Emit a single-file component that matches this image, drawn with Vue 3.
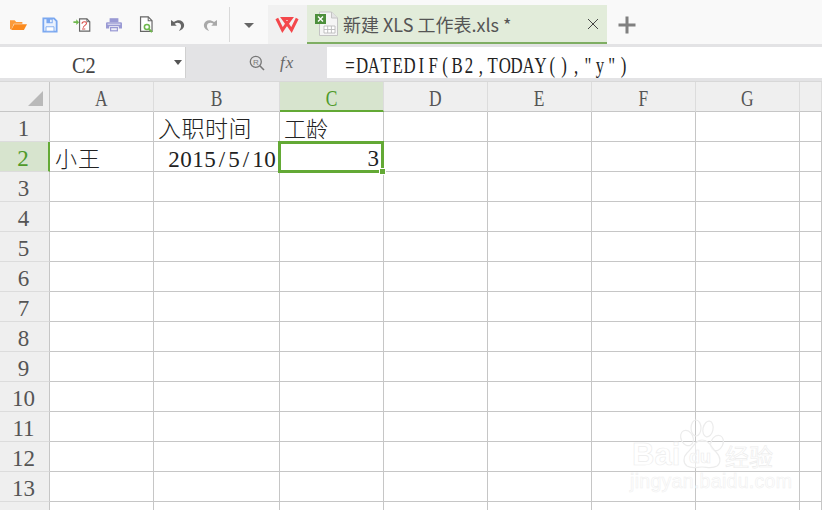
<script setup>
const columns = [
  { name: 'A', active: false }, { name: 'B', active: false }, { name: 'C', active: true },
  { name: 'D', active: false }, { name: 'E', active: false }, { name: 'F', active: false },
  { name: 'G', active: false }, { name: '', active: false }
]
const rows = Array.from({ length: 14 }, (_, i) => i + 1)
const chars = (s) => s.split('')
const formula = chars('=DATEDIF(B2,TODAY(),"y")')
const dateChars = chars('2015/5/10')
const colIndexes = [0, 1, 2, 3, 4, 5, 6, 7]
</script>

<template>
  <div class="app">
    <div class="toolbar">
      <div class="tools">
        <button class="tool">
          <svg width="17" height="14" viewBox="2 3 22 15">
            <path d="M2 4.500h6l2 2h8v2.500H7L4 16H2z" fill="#fb9a3a" />
            <path d="M7.500 9.500H24l-4 7.500H3.500z" fill="#fb8a1e" />
          </svg>
        </button>
        <button class="tool">
          <svg width="16" height="16" viewBox="1 1 18 18">
            <path d="M2.500 2.500h12l3 3v12h-15z" fill="#eaf1fd" stroke="#7ba8f0" stroke-width="2" />
            <path d="M6 3h7v5H6z" fill="#7ba8f0" />
            <path d="M10 4h2v3h-2z" fill="#eaf1fd" />
            <path d="M5.500 12h9v5h-9z" fill="#fff" stroke="#7ba8f0" stroke-width="1" />
          </svg>
        </button>
        <button class="tool">
          <svg width="18" height="16" viewBox="0 1 22 18">
            <path d="M8 2.500h9l3.500 3.500v11.500H8z" fill="#fff" stroke="#666" stroke-width="1.400" />
            <path d="M17 2.500V6h3.500" fill="none" stroke="#666" stroke-width="1.200" />
            <path d="M0.500 5.500h3.500V3l3.500 3.500L4 10V7.500H0.500z" fill="#6fb84d" />
            <path d="M11 8.500c0-3 5.500-3.500 5.500-.500 0 2.500-4 2.500-4 5.500M11 15h4" fill="none" stroke="#d9534f" stroke-width="1.300" />
          </svg>
        </button>
        <button class="tool">
          <svg width="16" height="14" viewBox="1 2 20 17">
            <path d="M5.500 2h11v5h-11z" fill="#9a9ad4" />
            <path d="M1 8.500Q1 7 2.500 7h17Q21 7 21 8.500V15h-4v-3H5v3H1z" fill="#9a9ad4" />
            <path d="M6 13h10v5.500H6z" fill="#9a9ad4" />
            <path d="M3 9.500h16" stroke="#fff" stroke-width="1" />
            <path d="M7.500 14.500h7v2.500h-7z" fill="#eeeef8" />
          </svg>
        </button>
        <button class="tool">
          <svg width="15" height="17" viewBox="2 0.500 16 20">
            <path d="M3 1.500h9l4.500 4.500v12.500H3z" fill="#fff" stroke="#666" stroke-width="1.400" />
            <path d="M12 1.500V6h4.500" fill="none" stroke="#666" stroke-width="1.200" />
            <circle cx="10.500" cy="13.500" r="3" fill="none" stroke="#6fb84d" stroke-width="1.800" />
            <path d="M12.800 15.800L16.500 19.500" stroke="#6fb84d" stroke-width="2.200" />
          </svg>
        </button>
        <button class="tool">
          <svg width="14" height="14" viewBox="1 3 17 15">
            <path d="M1 4.500v7h7L5.500 9C8 7 12 7.500 13 10.500c.7 2.300-.5 5-2.500 7 4.500-1 7-4.500 6.300-8C16 5 10 2.500 4.500 7z" fill="#666" />
          </svg>
        </button>
        <button class="tool">
          <svg width="14" height="14" viewBox="2 3 17 15">
            <path d="M19 4.500v7h-7l2.500-2.500C12 7 8 7.500 7 10.500c-.7 2.300.5 5 2.500 7-4.500-1-7-4.500-6.300-8C4 5 10 2.500 15.500 7z" fill="#a9a9a9" />
          </svg>
        </button>
      </div>
      <div class="separator"></div>
      <div class="caret-slot"><span class="caret dark"></span></div>
      <div class="wps-btn">
        <svg width="24" height="16" viewBox="0 0 24 16">
          <path d="M1.800 1.500L7.500 13L12 6.500L16.500 13L22.200 1.500M8 1.500h8L12 7z" fill="none" stroke="#f4474b" stroke-width="3" stroke-linejoin="miter" />
        </svg>
      </div>
      <div class="tab">
        <svg class="xls-icon" width="24" height="26" viewBox="0 0 24 26">
          <path d="M4.500 1h12l6 6v17.500h-18z" fill="#f5f5f5" stroke="#c4c4c4" />
          <path d="M16.500 1v6h6" fill="#e4e4e4" stroke="#c4c4c4" />
          <path d="M9 15h11v7H9zM9 18.500h11M12.700 15v7M16.400 15v7" fill="#fff" stroke="#bbb" stroke-width=".9" />
          <rect x="0" y="3" width="11" height="10" fill="#4d8f3c" />
          <path d="M3 5.500l5 5M8 5.500l-5 5" stroke="#fff" stroke-width="1.400" />
        </svg>
        <span class="tab-title">新建 XLS 工作表.xls *</span>
        <svg class="tab-close" width="12" height="12" viewBox="0 0 12 12">
          <path d="M1 1l10 10M11 1L1 11" stroke="#444" stroke-width="1" />
        </svg>
      </div>
      <svg class="plus" width="20" height="20" viewBox="0 0 20 20">
        <path d="M10 1.500v17M1.500 10h17" stroke="#808080" stroke-width="3" />
      </svg>
    </div>

    <div class="formula-bar">
      <div class="name-box">
        <span class="name-value narrow">C2</span>
        <span class="caret"></span>
      </div>
      <div class="fx-tools">
        <svg class="zoom-r" width="16" height="16" viewBox="0 0 16 16">
          <circle cx="6.800" cy="6.800" r="5.500" fill="none" stroke="#777" stroke-width="1.300" />
          <path d="M10.800 10.800L15 15" stroke="#777" stroke-width="1.600" />
          <text x="6.800" y="9.500" class="zoom-letter">R</text>
        </svg>
        <span class="fx">fx</span>
      </div>
      <div class="formula-input">
        <div class="formula-text">
          <span v-for="(c, i) in formula" :key="i" class="ch-wide">{{ c }}</span>
        </div>
      </div>
    </div>

    <div class="sheet">
      <div class="corner"><span class="corner-mark"></span></div>
      <div
        v-for="col in columns"
        :key="col.name"
        class="col-head"
        :class="{ active: col.active }"
      ><span class="narrow">{{ col.name }}</span></div>

      <template v-for="row in rows" :key="row">
        <div class="row-head" :class="{ active: row === 2 }">{{ row < 14 ? row : '' }}</div>
        <div v-for="c in colIndexes" :key="c" class="cell">
          <span v-if="row === 1 && c === 1" class="cjk head-b">入职时间</span>
          <span v-else-if="row === 1 && c === 2" class="cjk head-c">工龄</span>
          <span v-else-if="row === 2 && c === 0" class="cjk name">小王</span>
          <span v-else-if="row === 2 && c === 1" class="date">
            <span v-for="(d, i) in dateChars" :key="i" class="ch">{{ d }}</span>
          </span>
          <div v-else-if="row === 2 && c === 2" class="selected">
            <span class="value">3</span>
            <span class="handle"></span>
          </div>
        </div>
      </template>
    </div>

    <svg class="watermark" width="160" height="80" viewBox="0 0 160 80">
      <g fill="none" stroke="#ececec" stroke-width="1.200">
        <ellipse cx="57" cy="20" rx="6" ry="8" transform="rotate(-25 57 20)" />
        <ellipse cx="66" cy="10" rx="5" ry="8" />
        <ellipse cx="78" cy="11" rx="5" ry="8" transform="rotate(12 78 11)" />
        <ellipse cx="87" cy="25" rx="6" ry="8" transform="rotate(25 87 25)" />
        <path d="M72 22c7 0 9 7 14 12 5 5 5 11 1 14-5 3-10 1-15 1s-10 2-15-1c-4-3-4-9 0-13 6-5 8-13 15-13z" fill="#fff" fill-opacity=".6" />
      </g>
      <text x="2" y="47" class="wm wm-bai">Bai</text>
      <text x="59" y="45" class="wm wm-du">du</text>
      <text x="95" y="48" class="wm wm-cn">经验</text>
      <text x="0" y="70" class="wm wm-url">jingyan.baidu.com</text>
    </svg>
  </div>
</template>

<style>
html, body { margin: 0; padding: 0; background: #fff; }
</style>

<style scoped>
.app {
  position: relative;
  width: 822px;
  height: 510px;
  overflow: hidden;
  background: #fff;
  font-family: "Liberation Serif", serif;
}

.toolbar {
  height: 44px;
  background: #f9f9f9;
  display: flex;
  align-items: flex-end;
  box-sizing: border-box;
}
.tools {
  display: flex;
  height: 44px;
  align-items: center;
  padding-left: 2px;
  padding-top: 5px;
  box-sizing: border-box;
}
.tool {
  width: 32px;
  height: 32px;
  display: flex;
  align-items: center;
  justify-content: center;
  padding: 0;
  border: 0;
  background: none;
}
.separator {
  width: 1px;
  height: 35px;
  background: #d9d9d9;
  margin: 0 0 2px 3px;
}
.caret-slot {
  width: 38px;
  height: 44px;
  display: flex;
  align-items: center;
  justify-content: center;
  padding-top: 6px;
  box-sizing: border-box;
}
.caret {
  width: 0;
  height: 0;
  border-left: 4px solid transparent;
  border-right: 4px solid transparent;
  border-top: 5px solid #555;
}
.caret.dark { border-left-width: 5px; border-right-width: 5px; border-top-color: #666; }
.wps-btn {
  width: 39px;
  height: 39px;
  background: #f1f1f1;
  display: flex;
  align-items: center;
  justify-content: center;
  padding-right: 2px;
  box-sizing: border-box;
}
.tab {
  width: 300px;
  height: 39px;
  box-sizing: border-box;
  background: #e2ecda;
  border-bottom: 2px solid #7fae63;
  display: flex;
  align-items: center;
  padding-left: 8px;
}
.xls-icon { flex: none; }
.tab-title {
  font-family: "Noto Sans CJK SC", "Noto Sans", sans-serif;
  font-size: 18px;
  color: #555;
  margin-left: 4px;
  white-space: nowrap;
  flex: 1;
}
.tab-close { margin-right: 8px; flex: none; }
.plus { margin: 6px 0 0 10px; flex: none; align-self: center; }

.formula-bar {
  height: 38px;
  background: #e3e3e5;
  display: flex;
  align-items: center;
  box-sizing: border-box;
  padding: 3px 0;
  border-bottom: 1px solid #d8d8d8;
}
.name-box {
  width: 186px;
  height: 31px;
  background: #fff;
  border-right: 1px solid #d0d0d0;
  box-sizing: border-box;
  display: flex;
  align-items: center;
  justify-content: space-between;
  padding: 0 3px 0 72px;
}
.narrow {
  display: inline-block;
  transform: scaleX(.76);
}
.name-value {
  font-size: 24px;
  color: #444;
  height: 31px;
  line-height: 36px;
  transform: scaleX(.85);
  transform-origin: left;
}
.fx-tools {
  width: 141px;
  display: flex;
  align-items: center;
  padding-left: 63px;
  box-sizing: border-box;
}
.zoom-letter {
  font-family: "Liberation Sans", sans-serif;
  font-size: 8px;
  fill: #777;
  text-anchor: middle;
}
.fx {
  font-style: italic;
  font-size: 17px;
  color: #666;
  margin-left: 15px;
  letter-spacing: 1px;
}
.formula-input {
  flex: 1;
  height: 31px;
  background: #fff;
  box-sizing: border-box;
  padding-left: 17px;
  white-space: nowrap;
  overflow: hidden;
}
.formula-text {
  transform: scaleX(.7);
  transform-origin: left;
  font-size: 24px;
  line-height: 36px;
  color: #222;
}
.ch-wide {
  display: inline-block;
  width: 17px;
  text-align: center;
}
.ch {
  display: inline-block;
  width: 12px;
  text-align: center;
}

.sheet {
  display: grid;
  grid-template-columns: 50px 104px 126px 104px 104px 104px 104px 104px 22px;
  grid-auto-rows: 30px;
  background: #fff;
}
.corner, .col-head, .row-head, .cell {
  box-sizing: border-box;
  border-right: 1px solid #c6c6c6;
  border-bottom: 1px solid #c6c6c6;
}
.corner {
  background: #efefef;
  position: relative;
}
.corner-mark {
  position: absolute;
  right: 6px;
  bottom: 5px;
  width: 0;
  height: 0;
  border-left: 15px solid transparent;
  border-bottom: 15px solid #b9b9b9;
}
.col-head {
  background: #efefef;
  text-align: center;
  font-size: 23px;
  line-height: 34px;
  height: 30px;
  color: #555;
  border-right-color: #dcdcdc;
  overflow: hidden;
}
.col-head.active {
  background: #d7e4ce;
  color: #4f9a2a;
  border-bottom: 2px solid #63a935;
}
.row-head {
  background: #efefef;
  text-align: center;
  font-size: 23px;
  line-height: 34px;
  color: #555;
  border-bottom-color: #dcdcdc;
  padding-right: 2px;
  overflow: hidden;
}
.row-head.active {
  background: #d7e4ce;
  color: #4f9a2a;
  border-right: 2px solid #63a935;
}
.cell {
  position: relative;
  font-size: 23px;
  color: #222;
  white-space: nowrap;
}
.cjk {
  font-family: "Noto Sans CJK SC", sans-serif;
  font-weight: 300;
  line-height: 30px;
  display: block;
}
.head-b { font-size: 23px; padding-left: 4px; letter-spacing: .5px; }
.head-c { font-size: 22px; padding-left: 4px; }
.name { font-size: 22px; padding-left: 5px; letter-spacing: 1px; }
.date {
  display: block;
  padding-left: 14px;
  line-height: 35px;
}
.selected {
  position: absolute;
  left: -2px;
  top: -1px;
  width: 106px;
  height: 32px;
  box-sizing: border-box;
  border: 3px solid #63a935;
  text-align: right;
  padding-right: 2px;
  line-height: 29px;
  z-index: 1;
}
.value { font-size: 23px; }
.handle {
  position: absolute;
  right: -5px;
  bottom: -5px;
  width: 5px;
  height: 5px;
  background: #63a935;
  border: 1px solid #fff;
}

.watermark {
  position: absolute;
  left: 630px;
  top: 418px;
  overflow: visible;
}
.wm {
  fill: rgba(255, 255, 255, .8);
  stroke: #ececec;
  stroke-width: .6px;
}
.wm-bai { font-family: "Liberation Sans", sans-serif; font-size: 31px; font-weight: 700; }
.wm-du { font-family: "Liberation Sans", sans-serif; font-size: 18px; font-weight: 700; }
.wm-cn { font-family: "Noto Sans CJK SC", sans-serif; font-size: 24px; }
.wm-url { font-family: "Liberation Sans", sans-serif; font-size: 19.500px; letter-spacing: .300px; stroke: #f0f0f0; }
</style>
